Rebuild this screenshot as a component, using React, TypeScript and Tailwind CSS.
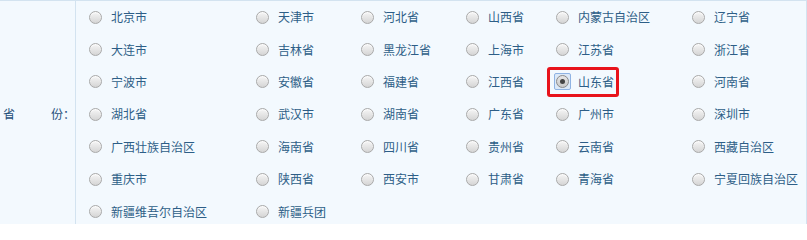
import React from "react";

const rows: string[][] = [
  ["北京市", "天津市", "河北省", "山西省", "内蒙古自治区", "辽宁省"],
  ["大连市", "吉林省", "黑龙江省", "上海市", "江苏省", "浙江省"],
  ["宁波市", "安徽省", "福建省", "江西省", "山东省", "河南省"],
  ["湖北省", "武汉市", "湖南省", "广东省", "广州市", "深圳市"],
  ["广西壮族自治区", "海南省", "四川省", "贵州省", "云南省", "西藏自治区"],
  ["重庆市", "陕西省", "西安市", "甘肃省", "青海省", "宁夏回族自治区"],
  ["新疆维吾尔自治区", "新疆兵团"],
];

function Radio({ checked }: { checked?: boolean }) {
  if (checked) {
    return (
      <span className="relative flex h-[13px] w-[13px] shrink-0 items-center justify-center">
        <span className="absolute -inset-[2px] rounded-[2px] border border-[#8fb3e3] bg-[#dce9f8]" />
        <span className="relative flex h-[13px] w-[13px] items-center justify-center rounded-full border border-[#8a8a8a] bg-gradient-to-b from-[#e6e6e6] to-[#c9c9c9]">
          <span className="h-[5px] w-[5px] rounded-full bg-[#444]" />
        </span>
      </span>
    );
  }
  return (
    <span className="h-[13px] w-[13px] shrink-0 rounded-full border border-[#a9a9a9] bg-gradient-to-b from-[#f6f6f6] to-[#d5d5d5] shadow-[inset_0_1px_1px_rgba(255,255,255,0.8)]" />
  );
}

export default function App() {
  return (
    <div
      className="flex h-[224px] w-[807px] border-t border-r border-[#d3e3f0] bg-[#f3f9fe] text-[12px] text-[#2d5e87]"
      style={{ fontFamily: '"Noto Sans CJK SC", "Noto Sans", sans-serif' }}
    >
      <div className="flex w-[76px] shrink-0 items-center border-r border-[#d3e3f0] pl-[3px] pt-[2px] text-[#1f4f7a]">
        <span>省</span>
        <span className="ml-[36px]">份：</span>
      </div>
      <div className="grid flex-1 grid-cols-[167px_105px_105px_90px_136px_1fr] content-start pl-[13px]">
        {rows.map((row, ri) =>
          row.map((name, ci) => {
            const checked = name === "山东省";
            return (
              <div key={`${ri}-${ci}`} className="relative flex h-[32.4px] items-center">
                {checked && (
                  <span className="absolute left-[-9px] top-[1px] h-[30px] w-[72px] rounded-[3px] border-[3px] border-[#e8131b]" />
                )}
                <Radio checked={checked} />
                <span className="ml-[9px] whitespace-nowrap leading-none">{name}</span>
              </div>
            );
          })
        )}
      </div>
    </div>
  );
}
